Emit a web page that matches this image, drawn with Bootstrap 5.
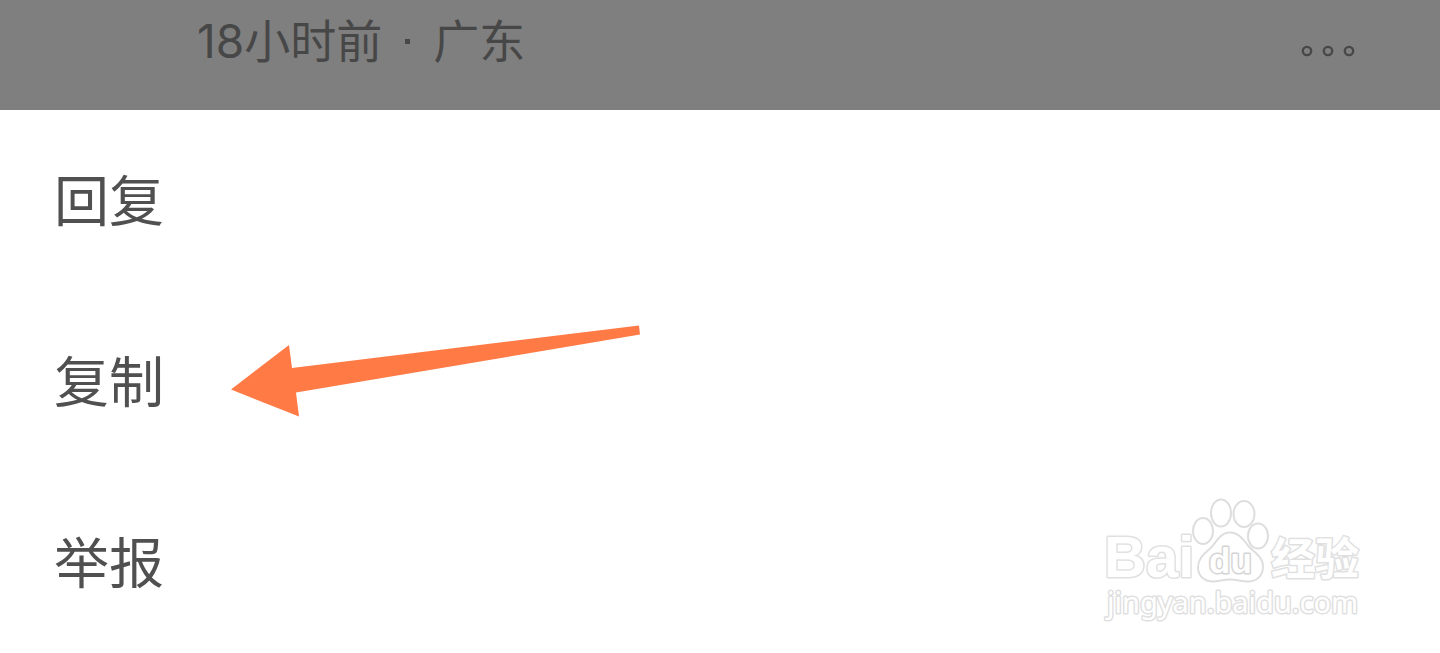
<!DOCTYPE html>
<html lang="zh-CN">
<head>
<meta charset="utf-8">
<meta name="viewport" content="width=device-width, initial-scale=1">
<title>评论操作</title>
<link href="https://cdn.jsdelivr.net/npm/bootstrap@5.3.0/dist/css/bootstrap.min.css" rel="stylesheet">
<style>
body { font-family: "Noto Sans CJK SC", sans-serif; background: #fff; color: #505050; }
.comment-bar { background: #7f7f7f; height: 110px; padding: 9px 80px 0 197px; }
.comment-meta { color: #474747; font-family: Inter, "Noto Sans CJK SC", sans-serif; font-size: 46px; line-height: 64px; }
.dot-sep { width: 5px; height: 5px; background: #474747; margin: 0 23px; }
.more-btn { color: #474747; margin-top: 33px; line-height: 0; }
.sheet-item { height: 181px; padding: 0 54px 8px; font-size: 55px; line-height: 80px; color: #505050; }
.arrow-mark { left: 230px; top: 214px; pointer-events: none; }
.watermark { right: 74px; bottom: 28px; pointer-events: none; }
</style>
</head>
<body>
<header class="comment-bar d-flex justify-content-between align-items-start">
  <div class="comment-meta d-flex align-items-center"><span>18小时前</span><span class="dot-sep"></span><span>广东</span></div>
  <button type="button" class="more-btn btn p-0 border-0" aria-label="更多">
    <svg width="60" height="16" viewBox="0 0 60 16" fill="none" stroke="#474747" stroke-width="2.3"><circle cx="7" cy="9" r="4.2"/><circle cx="28" cy="9" r="4.2"/><circle cx="49" cy="9" r="4.2"/></svg>
  </button>
</header>
<main class="position-relative">
  <div class="d-flex flex-column">
    <button type="button" class="sheet-item btn border-0 rounded-0 text-start">回复</button>
    <button type="button" class="sheet-item btn border-0 rounded-0 text-start">复制</button>
    <button type="button" class="sheet-item btn border-0 rounded-0 text-start">举报</button>
  </div>
  <svg class="arrow-mark position-absolute" width="412" height="96" viewBox="0 0 412 96" aria-hidden="true"><path fill="#ff7a45" d="M1 65.500L59 21l3 23L409 1.500l1 9L66 68.500l3 24z"/></svg>
  <svg class="watermark position-absolute" width="266" height="130" viewBox="0 0 266 130" aria-hidden="true">
    <g fill="#fff" stroke="#e0e0e0" stroke-width="3" stroke-linejoin="round" paint-order="stroke">
      <text x="4" y="82" font-family="Liberation Sans, sans-serif" font-weight="700" font-size="58">Bai</text>
      <text x="171" y="80" font-family="Noto Sans CJK SC, sans-serif" font-weight="700" font-size="44">经验</text>
      <text x="7" y="118" font-family="Noto Sans, sans-serif" font-size="29">jingyan.baidu.com</text>
    </g>
    <g fill="#fff" stroke="#dedede" stroke-width="2">
      <ellipse cx="103" cy="36" rx="10" ry="13"/>
      <ellipse cx="121" cy="18" rx="10" ry="13.500"/>
      <ellipse cx="144" cy="19" rx="10.500" ry="13"/>
      <ellipse cx="158" cy="41" rx="10" ry="12.500"/>
      <path d="M130 37.500c9 0 13 7 18 13 6 7 15 11 15 21 0 9-6 15-15 15-7 0-11-2-18-2s-11 2-17 2c-9 0-15-6-15-14 0-11 9-15 15-22 5-7 9-13 17-13z"/>
    </g>
    <text x="109" y="78" font-family="Liberation Sans, sans-serif" font-weight="700" font-size="35" fill="#fff" stroke="#d4d4d4" stroke-width="3" paint-order="stroke" stroke-linejoin="round">du</text>
  </svg>
</main>
<script src="https://cdn.jsdelivr.net/npm/bootstrap@5.3.0/dist/js/bootstrap.bundle.min.js"></script>
</body>
</html>
